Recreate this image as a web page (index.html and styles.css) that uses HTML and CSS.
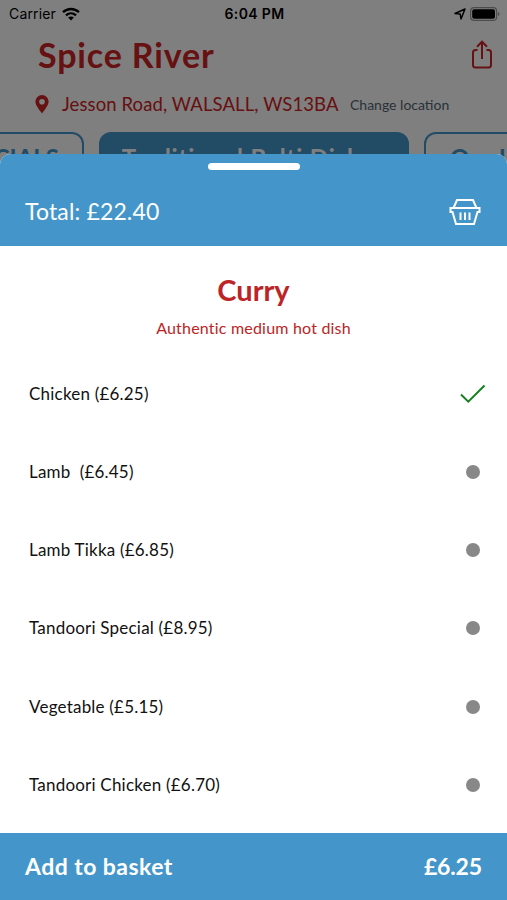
FILE: index.html
```html
<!DOCTYPE html>
<html lang="en">
<head>
<meta charset="utf-8">
<title>Spice River</title>
<link rel="stylesheet" href="styles.css">
</head>
<body>
<div class="phone">
  <section class="restaurant">
    <div class="status">
      <div class="carrier"><span>Carrier</span>
        <svg width="18" height="14" viewBox="0 0 18 14"><g fill="none" stroke="#000" stroke-width="2.4"><path d="M1 5.2C5.6.9 12.4.9 17 5.2"/><path d="M4 8.4c2.9-2.7 7.1-2.7 10 0"/></g><path d="M9 13.6 6.1 10.6c1.6-1.5 4.2-1.5 5.8 0z"/></svg>
      </div>
      <time class="clock">6:04 PM</time>
      <div class="power">
        <svg width="12" height="12" viewBox="0 0 12 12"><path d="M1 5.500 11 1 7 11 6.200 6z" fill="none" stroke="#000" stroke-width="1.5" stroke-linejoin="round"/></svg>
        <svg width="30" height="14" viewBox="0 0 30 14"><rect x=".6" y=".6" width="26" height="12.8" rx="3.5" fill="none" stroke="#999" stroke-width="1.2"/><rect x="2.2" y="2.2" width="22.8" height="9.6" rx="2"/><path d="M28 5c2 .8 2 3.200 0 4z" fill="#999"/></svg>
      </div>
    </div>
    <div class="title-row">
      <h1>Spice River</h1>
      <svg width="22" height="30" viewBox="0 0 22 30" fill="none" stroke="#cc2224" stroke-width="2"><path d="M6.500 10H4.500Q2 10 2 12.500V25Q2 27.500 4.500 27.500H17.500Q20 27.500 20 25V12.500Q20 10 17.500 10H15.500M11 19V2M6 6.700 11 1.700 16 6.700"/></svg>
    </div>
    <div class="location">
      <svg width="14" height="19" viewBox="0 0 14 19"><path fill="#cc2224" fill-rule="evenodd" d="M7 0a6.600 6.600 0 0 1 6.600 6.600C13.600 10.500 9.500 15 7 18.600 4.500 15 .4 10.500.4 6.600A6.600 6.600 0 0 1 7 0zm0 4a2.800 2.800 0 1 0 0 5.600A2.800 2.800 0 0 0 7 4z"/></svg>
      <span class="address">Jesson Road, WALSALL, WS13BA</span>
      <a class="change">Change location</a>
    </div>
    <nav class="tabs">
      <span class="tab first">SPECIALS</span>
      <span class="tab active">Traditional Balti Dishes</span>
      <span class="tab last">Our Upgrades</span>
    </nav>
  </section>
  <div class="scrim"></div>
  <main class="sheet">
    <header class="sheet-head">
      <div class="handle"></div>
      <div class="summary">
        <span class="total">Total: £22.40</span>
        <svg width="32" height="28" viewBox="0 0 32 28" fill="none" stroke="#fff" stroke-width="2"><path d="M4.500 10 8 2H24L27.500 10M1.500 10H30.500V14H28.500L25 26H7L3.500 14H1.500zM11.500 14.500V22M16 14.500V22M20.500 14.500V22"/></svg>
      </div>
    </header>
    <section class="dish"><h2>Curry</h2><p>Authentic medium hot dish</p></section>
    <ul class="options">
      <li><span>Chicken (£6.25)</span><svg width="26" height="20" viewBox="0 0 26 20"><path d="M1 10.500 8.300 17.700 24.500 1.500" fill="none" stroke="#168020" stroke-width="2"/></svg></li>
      <li><span>Lamb&nbsp; (£6.45)</span><i class="dot"></i></li>
      <li><span>Lamb Tikka (£6.85)</span><i class="dot"></i></li>
      <li><span>Tandoori Special (£8.95)</span><i class="dot"></i></li>
      <li><span>Vegetable (£5.15)</span><i class="dot"></i></li>
      <li><span>Tandoori Chicken (£6.70)</span><i class="dot"></i></li>
    </ul>
    <footer class="basket"><span class="add">Add to basket</span><span class="price">£6.25</span></footer>
  </main>
</div>
</body>
</html>
```
FILE: styles.css
```css
* { box-sizing: border-box; }
body { margin: 0; font-family: Lato, "Liberation Sans", sans-serif; background: #fff; }
svg { display: block; flex: none; }
h1, h2, p, ul { margin: 0; padding: 0; }
.phone { position: relative; width: 507px; height: 900px; overflow: hidden; }
.restaurant { height: 200px; overflow: hidden; }
.status { display: grid; grid-template-columns: 1fr auto 1fr; align-items: center; height: 27px; padding: 0 7px 0 9px; font-family: Inter, sans-serif; font-size: 14px; }
.carrier { display: flex; align-items: center; gap: 6px; letter-spacing: .15px; }
.clock { font-weight: 600; letter-spacing: .35px; }
.power { display: flex; align-items: center; justify-content: flex-end; gap: 4px; }
.title-row { display: flex; justify-content: space-between; align-items: center; height: 55px; padding: 0 14px 0 38px; }
h1 { font-size: 34px; line-height: 54px; letter-spacing: .85px; color: #cc2224; }
.location { display: flex; align-items: center; height: 44px; padding-left: 35px; color: #cc2224; white-space: nowrap; }
.address { margin-left: 13px; width: 288px; font-size: 18.5px; letter-spacing: .1px; }
.change { font-size: 14px; color: #536572; }
.tabs { display: flex; gap: 15px; margin-left: -86px; padding-top: 6px; }
.tab { flex: none; height: 54px; border: 2px solid #4496ca; border-radius: 12px; font-size: 24px; line-height: 48px; font-weight: 700; color: #4496ca; text-align: center; white-space: nowrap; }
.first { width: 170px; padding-right: 23px; text-align: right; }
.active { width: 310px; color: #fff; background: #4496ca; letter-spacing: .8px; }
.last { width: 190px; padding-left: 24px; text-align: left; letter-spacing: .5px; }
.scrim { position: absolute; inset: 0; background: rgba(0, 0, 0, .5); }
.sheet { position: absolute; top: 154px; left: 0; right: 0; bottom: 0; display: flex; flex-direction: column; background: #fff; border-radius: 10px 10px 0 0; overflow: hidden; }
.sheet-head { height: 92px; background: #4496ca; color: #fff; padding-top: 9px; }
.handle { width: 92px; height: 7px; margin: 0 auto; border-radius: 4px; background: #fff; }
.summary { display: flex; justify-content: space-between; align-items: center; height: 84px; padding: 0 26px 0 25px; }
.total { font-size: 23px; letter-spacing: .15px; padding-bottom: 3px; }
.dish { height: 109px; padding-top: 27px; text-align: center; color: #bd2426; }
h2 { font-size: 29px; line-height: 34px; }
.dish p { margin-top: 11px; font-size: 16px; line-height: 20px; letter-spacing: .2px; }
.options { list-style: none; flex: 1; }
li { display: flex; justify-content: space-between; align-items: center; height: 78.15px; padding: 0 21px 0 29px; font-size: 17px; letter-spacing: .21px; color: #111; }
li span { padding-bottom: 1px; }
.dot { width: 14px; height: 14px; margin-right: 6px; border-radius: 50%; background: #888; }
.basket { display: flex; align-items: center; justify-content: space-between; height: 67px; padding: 0 25px 2px; background: #4496ca; color: #fff; font-size: 23px; font-weight: 700; }
.add { letter-spacing: .45px; }
.price { letter-spacing: -.15px; }
```
